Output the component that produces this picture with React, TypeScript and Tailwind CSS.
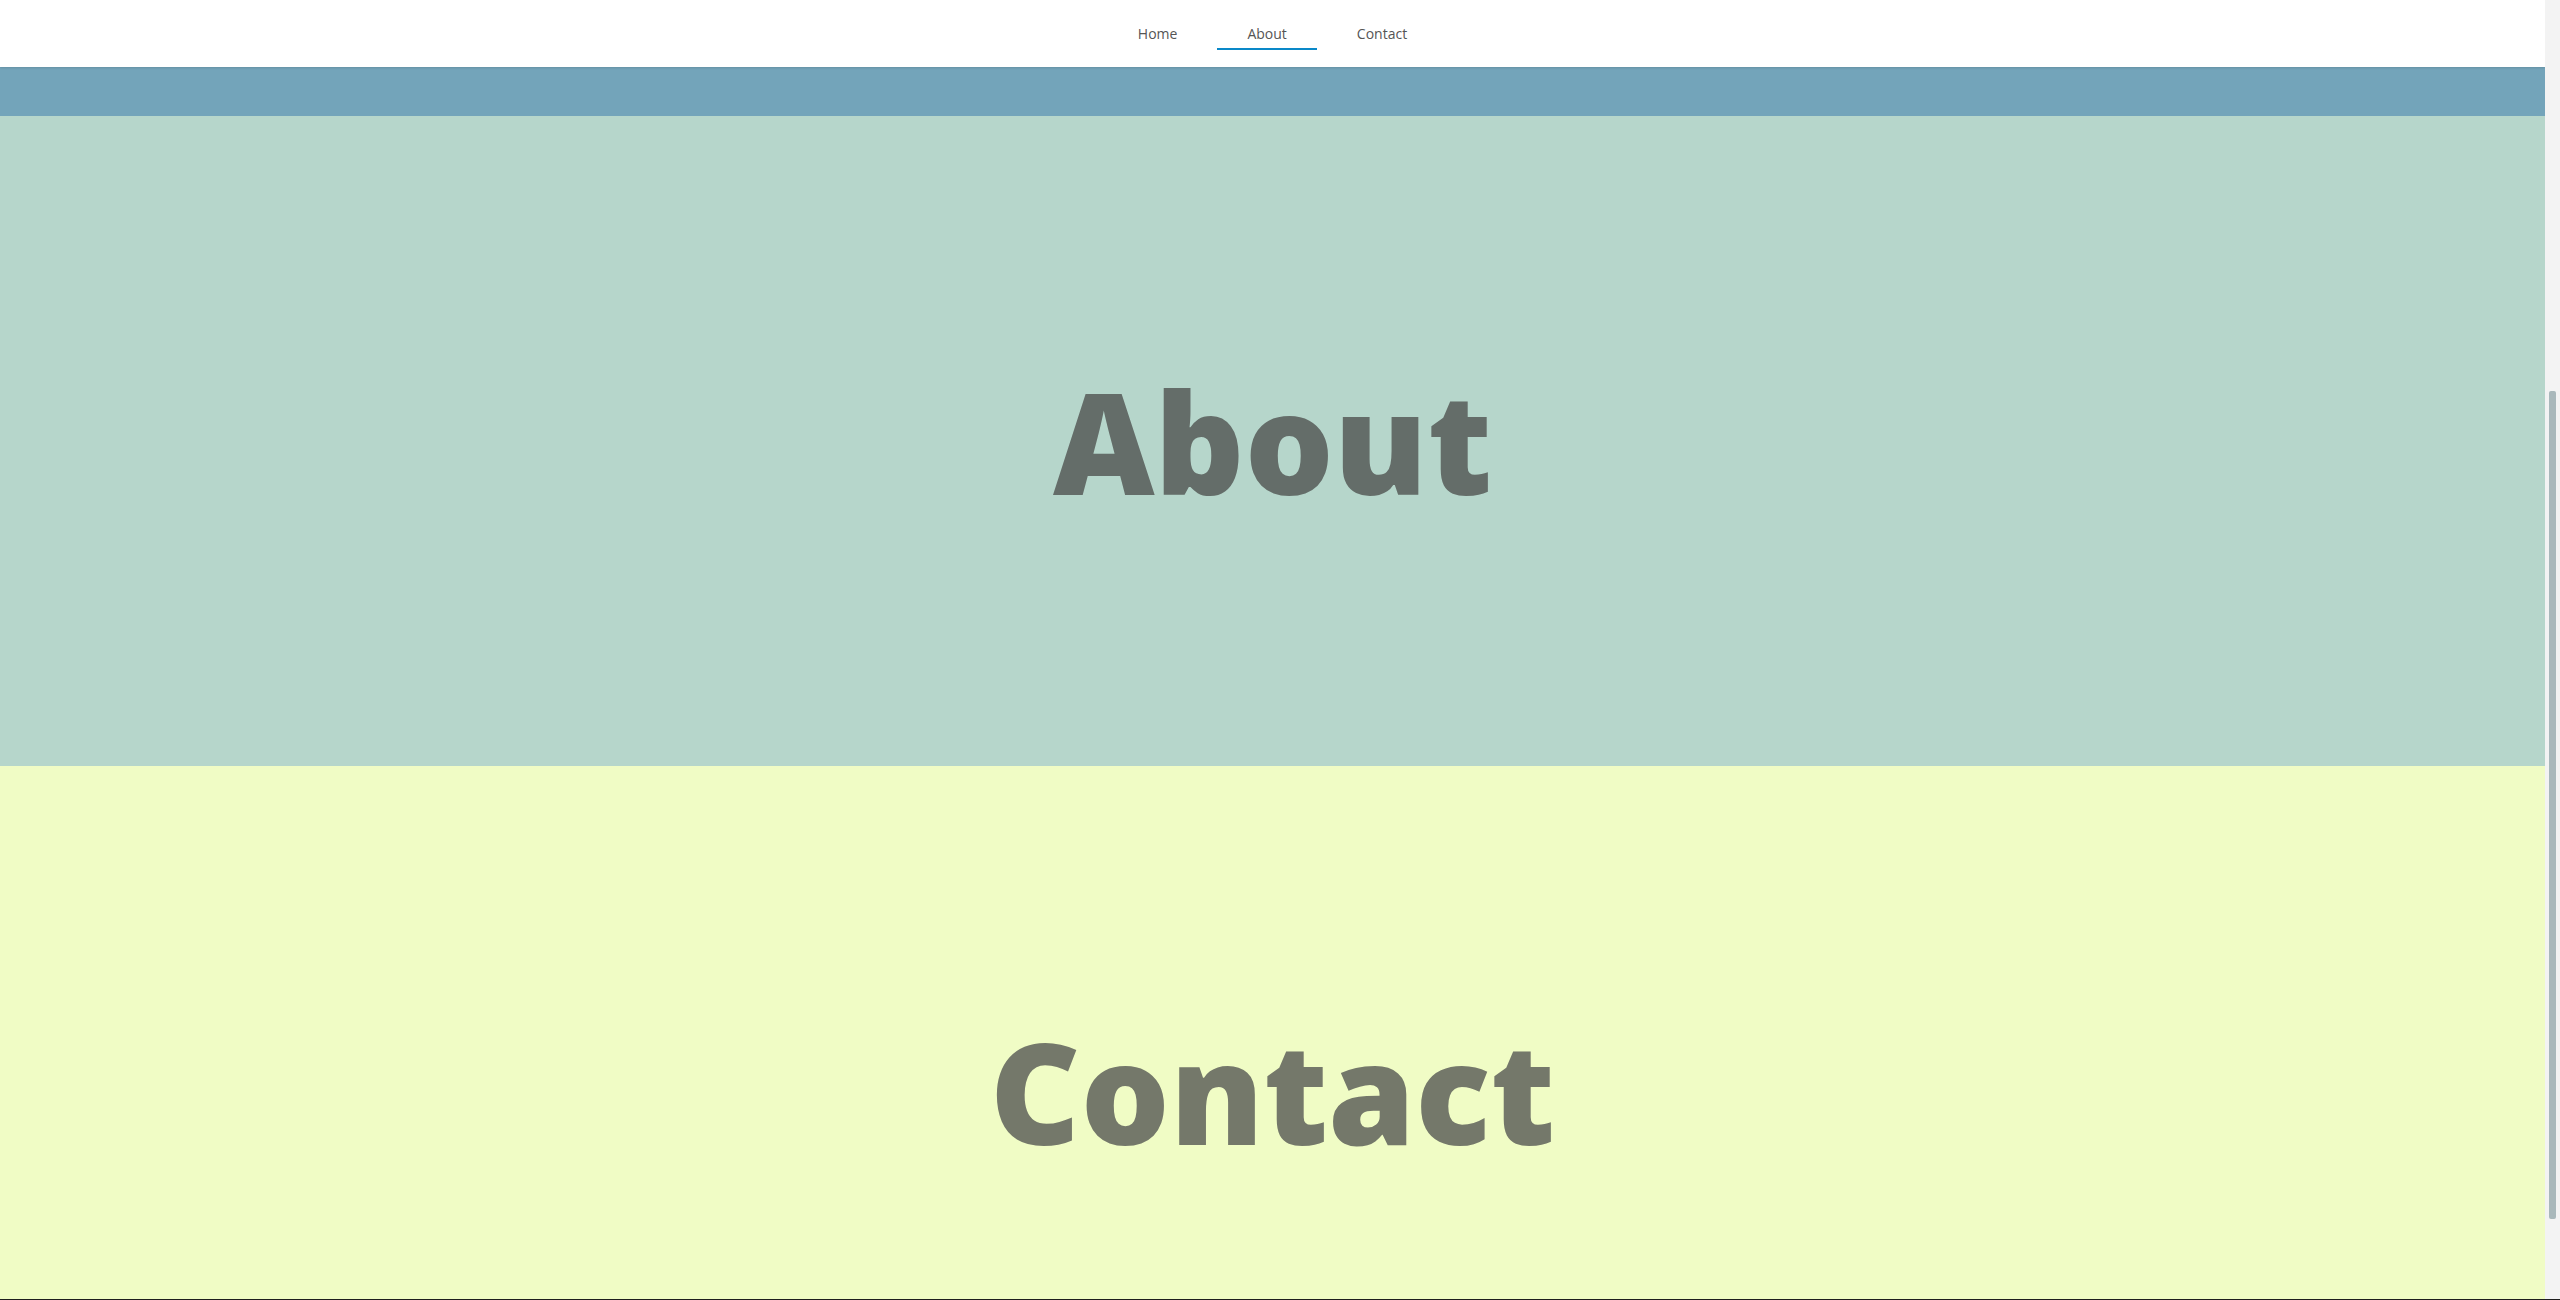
import React from "react";

const navItems = [
  { label: "Home", active: false },
  { label: "About", active: true },
  { label: "Contact", active: false },
];

export default function App() {
  return (
    <div
      className="w-[2560px] h-[1300px] overflow-hidden flex flex-col bg-white"
      style={{ fontFamily: '"Open Sans", "Noto Sans", sans-serif' }}
    >
      <div className="flex flex-1 min-h-0">
        <div className="w-[2545px] flex flex-col overflow-hidden">
          <nav className="h-[67px] shrink-0 bg-white flex justify-center gap-[10px] relative z-10 shadow-[0_1px_2px_rgba(0,0,0,0.12)]">
            {navItems.map((item) => (
              <a
                key={item.label}
                className={
                  item.active
                    ? "h-[50px] pt-[18px] px-[30px] flex items-center justify-center text-[14px] text-[#555555] border-b-2 border-[#0a88c8]"
                    : "h-[50px] pt-[18px] px-[30px] flex items-center justify-center text-[14px] text-[#555555] border-b-2 border-transparent"
                }
              >
                {item.label}
              </a>
            ))}
          </nav>
          <section className="h-[49px] shrink-0 bg-[#73a4ba]" />
          <section className="h-[650px] shrink-0 bg-[#b6d6cb] flex items-center justify-center">
            <h1 className="text-[140px] font-extrabold text-[#646d69] leading-normal">About</h1>
          </section>
          <section className="h-[650px] shrink-0 bg-[#f0fcc5] flex items-center justify-center">
            <h1 className="text-[140px] font-extrabold text-[#74786a] leading-normal">Contact</h1>
          </section>
        </div>
        <div className="w-[15px] bg-[#f3f3f3] pt-[391px] pl-[4px]">
          <div className="w-[7px] h-[828px] rounded-[2px] bg-[#a9b8bb]" />
        </div>
      </div>
      <div className="h-[1px] shrink-0 bg-[#1e1e1e]" />
    </div>
  );
}
